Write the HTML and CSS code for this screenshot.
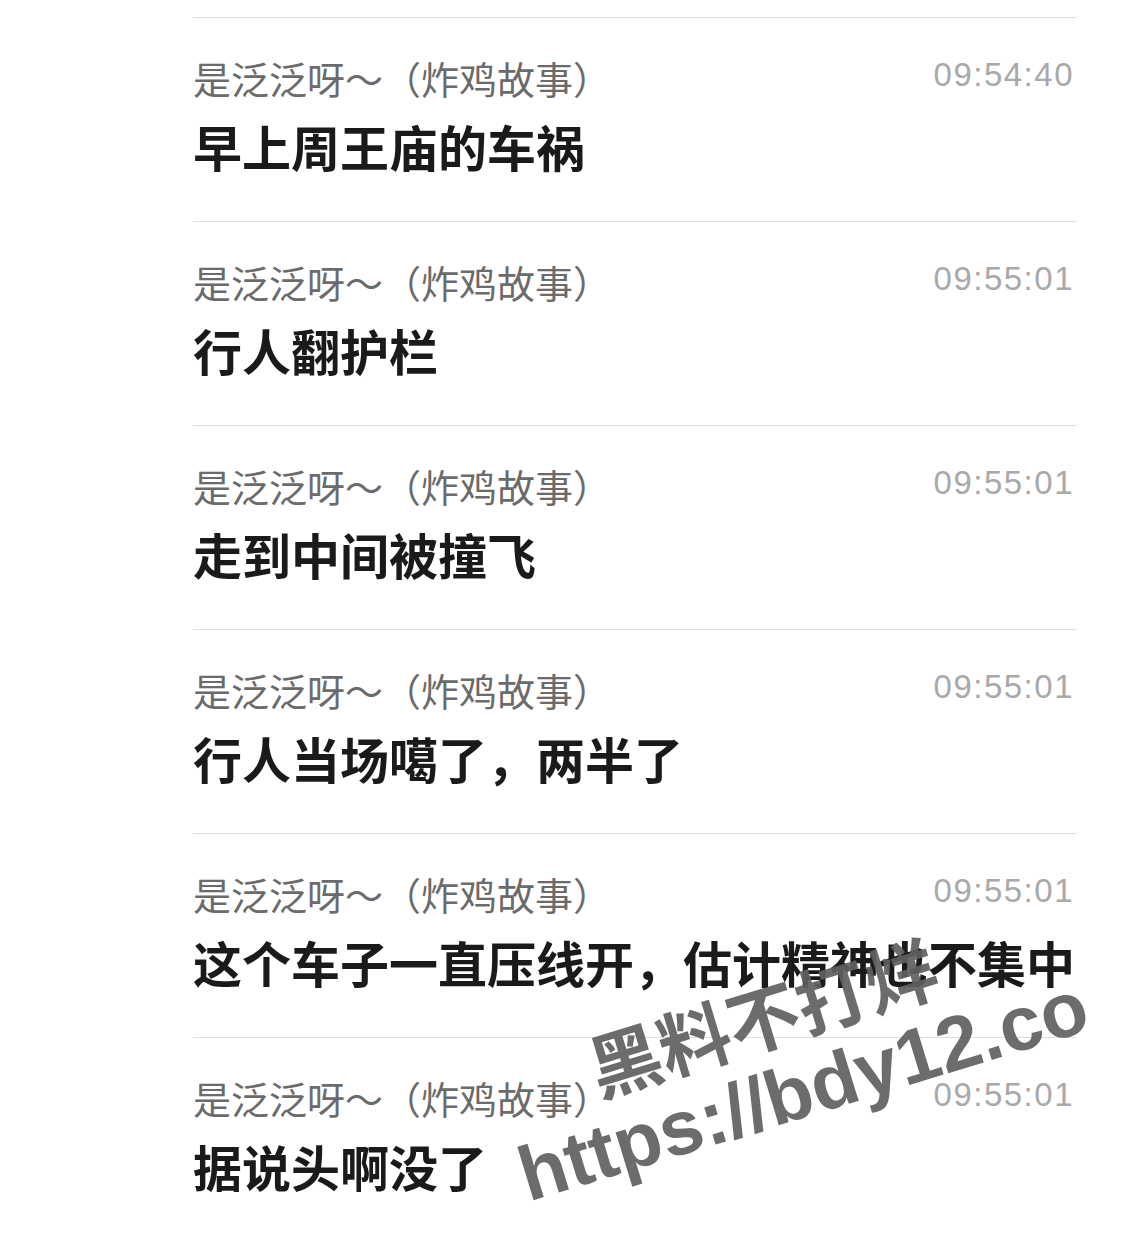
FILE: index.html
```html
<!DOCTYPE html>
<html lang="zh-CN">
<head>
  <meta charset="UTF-8">
  <meta name="viewport" content="width=device-width, initial-scale=1.0">
  <title>聊天记录</title>
  <link rel="stylesheet" href="styles.css">
</head>

<body>

  <div class="chat-list">
    <div class="chat-item">
      <div class="chat-head">
        <span class="chat-name">是泛泛呀～（炸鸡故事）</span>
        <span class="chat-time">09:54:40</span>
      </div>
      <p class="chat-text">早上周王庙的车祸</p>
    </div>

    <div class="chat-item">
      <div class="chat-head">
        <span class="chat-name">是泛泛呀～（炸鸡故事）</span>
        <span class="chat-time">09:55:01</span>
      </div>
      <p class="chat-text">行人翻护栏</p>
    </div>

    <div class="chat-item">
      <div class="chat-head">
        <span class="chat-name">是泛泛呀～（炸鸡故事）</span>
        <span class="chat-time">09:55:01</span>
      </div>
      <p class="chat-text">走到中间被撞飞</p>
    </div>

    <div class="chat-item">
      <div class="chat-head">
        <span class="chat-name">是泛泛呀～（炸鸡故事）</span>
        <span class="chat-time">09:55:01</span>
      </div>
      <p class="chat-text">行人当场噶了，两半了</p>
    </div>

    <div class="chat-item">
      <div class="chat-head">
        <span class="chat-name">是泛泛呀～（炸鸡故事）</span>
        <span class="chat-time">09:55:01</span>
      </div>
      <p class="chat-text">这个车子一直压线开，估计精神也不集中</p>
    </div>

    <div class="chat-item">
      <div class="chat-head">
        <span class="chat-name">是泛泛呀～（炸鸡故事）</span>
        <span class="chat-time">09:55:01</span>
      </div>
      <p class="chat-text">据说头啊没了</p>
    </div>
  </div>

  <!-- watermark over the list -->
  <div class="watermark watermark-cn">黑料不打烊</div>
  <div class="watermark watermark-url">https://bdy12.co</div>

</body>
</html>
```

FILE: styles.css
```css
/* General Reset */
* {
  margin: 0;
  padding: 0;
  box-sizing: border-box;
}

html, body {
  height: 100%;
  overflow: hidden;
}

body {
  font-family: 'Noto Sans CJK SC', 'Noto Sans', sans-serif;
  background: #fff;
  color: #1a1a1a;
}

/* Chat list */
.chat-list {
  margin-left: 193px;
  width: 883px;
  padding-top: 17px;
}

.chat-item {
  border-top: 1px solid #dedede;
  padding: 40px 2px 47px 0;
}

.chat-head {
  display: flex;
  justify-content: space-between;
  align-items: flex-start;
  height: 44px;
}

.chat-name {
  font-size: 38px;
  line-height: 40px;
  color: #6b6b6b;
}

.chat-time {
  font-family: 'Liberation Sans', Arial, sans-serif;
  font-size: 33px;
  line-height: 34px;
  letter-spacing: 1.5px;
  color: #a9a9a9;
}

.chat-text {
  margin-top: 16px;
  font-size: 49px;
  line-height: 56px;
  font-weight: 700;
  color: #1a1a1a;
  white-space: nowrap;
}

/* Watermark */
.watermark {
  position: absolute;
  transform: translate(-50%, -50%) rotate(-17deg);
  color: rgba(95, 95, 95, 0.92);
  white-space: nowrap;
  font-weight: 700;
}

.watermark-cn {
  left: 762px;
  top: 1015px;
  font-size: 72px;
  line-height: 1;
}

.watermark-url {
  left: 803px;
  top: 1090px;
  font-family: 'Liberation Sans', Arial, sans-serif;
  font-size: 77px;
  line-height: 1;
}
```
